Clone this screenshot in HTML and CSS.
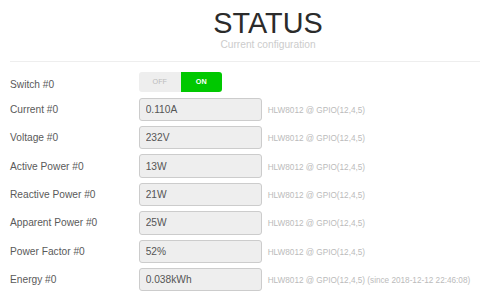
FILE: index.html
```html
<!DOCTYPE html>
<html lang="en">
<head>
    <meta charset="UTF-8">
    <meta name="viewport" content="width=device-width, initial-scale=1.0">
    <title>Status</title>
    <link rel="stylesheet" href="styles.css">
</head>
<body>
    <div class="header">
        <h1>STATUS</h1>
        <h2>Current configuration</h2>
    </div>

    <div class="status-form">
        <div class="row switch-row">
            <label>Switch #0</label>
            <div class="toggle">
                <span class="toggle-off">OFF</span>
                <span class="toggle-on">ON</span>
            </div>
        </div>

        <div class="row">
            <label for="current0">Current #0</label>
            <input type="text" id="current0" value="0.110A" readonly>
            <span class="hint">HLW8012 @ GPIO(12,4,5)</span>
        </div>

        <div class="row">
            <label for="voltage0">Voltage #0</label>
            <input type="text" id="voltage0" value="232V" readonly>
            <span class="hint">HLW8012 @ GPIO(12,4,5)</span>
        </div>

        <div class="row">
            <label for="active0">Active Power #0</label>
            <input type="text" id="active0" value="13W" readonly>
            <span class="hint">HLW8012 @ GPIO(12,4,5)</span>
        </div>

        <div class="row">
            <label for="reactive0">Reactive Power #0</label>
            <input type="text" id="reactive0" value="21W" readonly>
            <span class="hint">HLW8012 @ GPIO(12,4,5)</span>
        </div>

        <div class="row">
            <label for="apparent0">Apparent Power #0</label>
            <input type="text" id="apparent0" value="25W" readonly>
            <span class="hint">HLW8012 @ GPIO(12,4,5)</span>
        </div>

        <div class="row">
            <label for="factor0">Power Factor #0</label>
            <input type="text" id="factor0" value="52%" readonly>
            <span class="hint">HLW8012 @ GPIO(12,4,5)</span>
        </div>

        <div class="row">
            <label for="energy0">Energy #0</label>
            <input type="text" id="energy0" value="0.038kWh" readonly>
            <span class="hint">HLW8012 @ GPIO(12,4,5) (since 2018-12-12 22:46:08)</span>
        </div>
    </div>
</body>
</html>
```

FILE: styles.css
```css
body {
    font-family: 'Liberation Sans', Arial, sans-serif;
    margin: 0;
    background-color: #fff;
    overflow: hidden;
}

.header {
    box-sizing: border-box;
    width: 470px;
    margin-left: 10px;
    padding: 8.6px 0 11px 46px;
    text-align: center;
    border-bottom: 1px solid #eee;
}

h1 {
    margin: 0;
    font-size: 28.8px;
    line-height: 28.8px;
    font-weight: normal;
    color: #2b2b2b;
}

h2 {
    margin: 2.3px 0 0;
    font-size: 10.2px;
    line-height: 10.2px;
    font-weight: normal;
    color: #ccc;
}

.status-form {
    padding-left: 10px;
    margin-top: 10.3px;
}

.row {
    display: flex;
    align-items: baseline;
    height: 23.4px;
    margin-bottom: 5.03px;
}

.row label {
    width: 129px;
    flex-shrink: 0;
    font-size: 10.2px;
    color: #5a5a5a;
}

.row input {
    width: 123px;
    height: 23.4px;
    box-sizing: border-box;
    margin: 0;
    padding: 0 5.7px;
    border: 1px solid #ccc;
    border-radius: 3px;
    background-color: #eee;
    font-family: inherit;
    font-size: 10.2px;
    color: #555;
    outline: none;
}

.hint {
    margin-left: 5.7px;
    font-size: 8.2px;
    color: #bbb;
    white-space: nowrap;
}

.switch-row {
    align-items: flex-start;
    height: 19.4px;
    margin-bottom: 6px;
}

.switch-row label {
    padding-top: 2.8px;
    line-height: 19.4px;
}

.toggle {
    display: flex;
    width: 83px;
    height: 19.4px;
    border-radius: 3px;
    overflow: hidden;
    font-size: 7.2px;
    line-height: 19.4px;
    text-align: center;
}

.toggle-off {
    flex: 1;
    background-color: #eee;
    color: #bbb;
}

.toggle-on {
    flex: 1;
    background-color: #00c800;
    color: #fff;
    font-weight: bold;
}
```
